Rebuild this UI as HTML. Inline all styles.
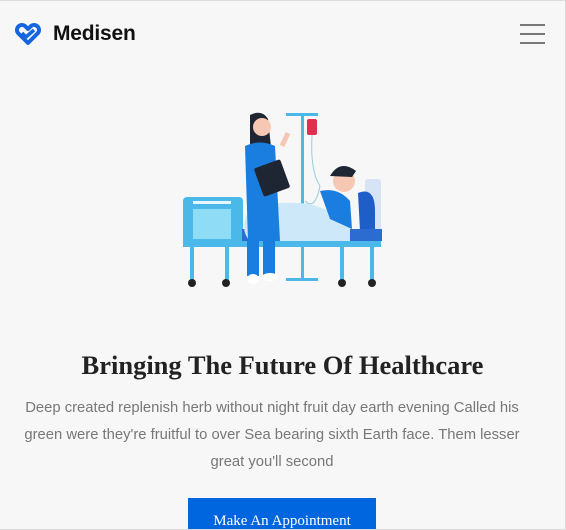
<!DOCTYPE html>
<html><head><meta charset="utf-8"><style>
*{margin:0;padding:0;box-sizing:border-box}
html,body{width:566px;height:530px;overflow:hidden;background:#f7f7f7}
body{border-top:1px solid #dcdcdc;border-right:1px solid #dcdcdc;position:relative;font-family:"Liberation Sans",sans-serif}
.logo{position:absolute;left:13px;top:21px;display:flex;align-items:center}
.logo span{font-size:21px;font-weight:bold;color:#111;margin-left:10px;letter-spacing:-0.2px}
.ham{position:absolute;left:520px;top:23px;width:25px}
.ham i{display:block;height:2px;background:#777;margin-bottom:7px}
h1{position:absolute;top:349px;left:0;width:565px;text-align:center;font-family:"Liberation Serif",serif;font-size:26.5px;font-weight:bold;color:#222}
p{position:absolute;top:394px;left:15px;width:514px;text-align:center;font-size:14.8px;line-height:27px;color:#777}
.btn{position:absolute;left:188px;top:497px;width:188px;height:40px;background:#0066e0;color:#fff;font-family:"Liberation Serif",serif;font-size:15px;text-align:center;padding-top:15px}
.bot{position:absolute;left:0;top:528px;width:566px;height:2px;background:#ddd}
</style></head><body>
<div class="logo"><svg width="30" height="24" viewBox="0 0 30 24"><path d="M15 21 L5 11 A5 5 0 0 1 12 4 L15 7 L18 4 A5 5 0 0 1 25 11 Z" fill="none" stroke="#1565e0" stroke-width="4" stroke-linejoin="round"/><path d="M9 11 L13 15 L21 8" fill="none" stroke="#1565e0" stroke-width="3.5"/></svg><span>Medisen</span></div>
<div class="ham"><i></i><i></i><i></i></div>
<svg style="position:absolute;left:170px;top:100px" width="220" height="190" viewBox="0 0 220 190">
<rect x="116" y="12" width="32" height="3" fill="#4ab8e8"/><rect x="131" y="12" width="3" height="168" fill="#4ab8e8"/><rect x="116" y="177" width="32" height="3" fill="#4ab8e8"/>
<rect x="137" y="18" width="10" height="16" rx="2" fill="#e03050"/><path d="M142 34 Q140 70 150 85 Q145 110 135 100" stroke="#9cd" fill="none"/>
<rect x="195" y="78" width="16" height="55" rx="3" fill="#d6e4f6"/><path d="M188 92 Q205 85 205 110 L205 130 L190 130 Z" fill="#1f5ec8"/>
<rect x="13" y="96" width="60" height="50" rx="4" fill="#4ab8e8"/><rect x="23" y="108" width="38" height="30" fill="#8fdcf6"/><rect x="23" y="100" width="38" height="3" fill="#e8f6ff"/>
<rect x="13" y="138" width="198" height="8" fill="#4ab8e8"/><rect x="72" y="128" width="140" height="12" fill="#2c6cd0"/>
<path d="M77 113 Q95 98 140 103 L180 117 L180 140 L80 140 Q70 130 77 113Z" fill="#cde8f8"/>
<path d="M150 90 Q168 86 180 100 L182 128 L160 118 Z" fill="#1a7ee0"/><circle cx="174" cy="80" r="11" fill="#f6c7b2"/><path d="M160 75 Q170 58 186 70 L182 76 Z" fill="#1f2633"/>
<rect x="20" y="146" width="4" height="34" fill="#4ab8e8"/><rect x="55" y="146" width="4" height="34" fill="#4ab8e8"/><rect x="170" y="146" width="4" height="34" fill="#4ab8e8"/><rect x="200" y="146" width="4" height="34" fill="#4ab8e8"/>
<circle cx="22" cy="182" r="4" fill="#222"/><circle cx="56" cy="182" r="4" fill="#222"/><circle cx="172" cy="182" r="4" fill="#222"/><circle cx="202" cy="182" r="4" fill="#222"/>
<path d="M80 14 Q92 8 98 18 L102 55 L80 52 Z" fill="#1f2633"/><circle cx="92" cy="26" r="9" fill="#f6c7b2"/>
<path d="M75 45 Q90 38 105 45 L110 140 L78 140 Z" fill="#1a7ee0"/><rect x="77" y="140" width="12" height="35" fill="#1a7ee0"/><rect x="93" y="140" width="12" height="35" fill="#1a7ee0"/>
<ellipse cx="83" cy="178" rx="6" ry="5" fill="#fff"/><ellipse cx="100" cy="176" rx="8" ry="4" fill="#fff"/>
<rect x="88" y="62" width="28" height="30" rx="2" transform="rotate(-20 102 77)" fill="#1f2633"/>
<path d="M112 45 L118 32" stroke="#f6c7b2" stroke-width="5"/>
</svg>
<h1>Bringing The Future Of Healthcare</h1>
<p>Deep created replenish herb without night fruit day earth evening Called his green were they're fruitful to over Sea bearing sixth Earth face. Them lesser great you'll second</p>
<div class="btn">Make An Appointment</div>
<div class="bot"></div>
</body></html>
